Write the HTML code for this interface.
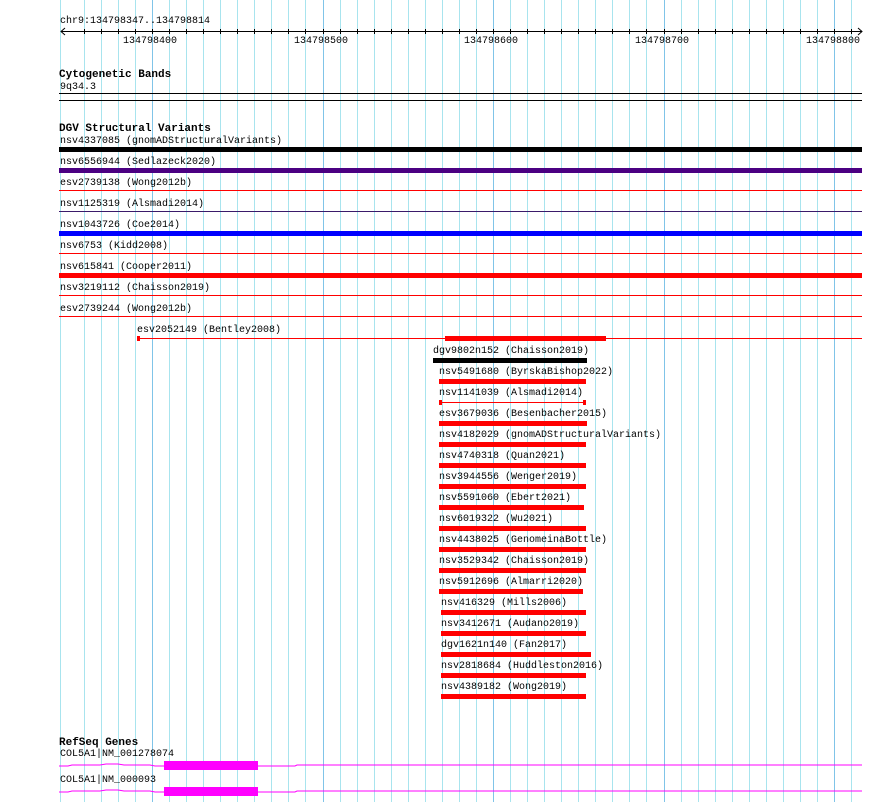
<!DOCTYPE html>
<html><head><meta charset="utf-8"><style>
body{margin:0;background:#fff;width:890px;height:802px;overflow:hidden;position:relative;font-family:"Liberation Mono","DejaVu Sans Mono",monospace;}
.t{position:absolute;font-size:10px;line-height:12px;white-space:pre;color:#000;}
.b{font-weight:bold;font-size:11px;}
svg{position:absolute;left:0;top:0}
</style></head><body>
<svg id="s" width="890" height="802" xmlns="http://www.w3.org/2000/svg"></svg>
<div class="t" style="left:60px;top:16px">chr9:134798347..134798814</div>
<div class="t" style="left:123px;top:36px">134798400</div>
<div class="t" style="left:294px;top:36px">134798500</div>
<div class="t" style="left:464px;top:36px">134798600</div>
<div class="t" style="left:635px;top:36px">134798700</div>
<div class="t" style="left:806px;top:36px">134798800</div>
<div class="t b" style="left:59px;top:69px">Cytogenetic Bands</div>
<div class="t" style="left:60px;top:82px">9q34.3</div>
<div class="t b" style="left:59px;top:123px">DGV Structural Variants</div>
<div class="t b" style="left:59px;top:737px">RefSeq Genes</div>
<div class="t" style="left:60px;top:749px">COL5A1|NM_001278074</div>
<div class="t" style="left:60px;top:775px">COL5A1|NM_000093</div>
<div id="labels"></div>
<script>
var s=document.getElementById('s'),h='';
function L(x1,y1,x2,y2,c,w){h+='<line x1="'+x1+'" y1="'+y1+'" x2="'+x2+'" y2="'+y2+'" stroke="'+c+'" stroke-width="'+(w||1)+'"/>';}
function R(x,y,w,hh,c){h+='<rect x="'+x+'" y="'+y+'" width="'+w+'" height="'+hh+'" fill="'+c+'"/>';}
L(60.5,0,60.5,802,'#a8e4ee');
for(var k=-4;k<=41;k++){var x=Math.round(152+17.05*k)+0.5;if(x>862)break;var major=(k%10==0);L(x,0,x,802,major?'#80c4e8':'#a8e4ee');}
L(61,31.5,862,31.5,'#000');
h+='<polyline points="65,28 61,31.5 65,35" fill="none" stroke="#000"/>';
h+='<polyline points="858,28 862,31.5 858,35" fill="none" stroke="#000"/>';
for(var k=-4;k<=41;k++){var x=Math.round(152+17.05*k)+0.5;if(x>858)break;L(x,29,x,34,'#000');}
L(59,93.5,862,93.5,'#000');L(59,100.5,862,100.5,'#000');
var rows=[['nsv4337085 (gnomADStructuralVariants)','#000',1],['nsv6556944 (Sedlazeck2020)','#4b0082',1],['esv2739138 (Wong2012b)','#ff0000',0],['nsv1125319 (Alsmadi2014)','#3a1a6a',0],['nsv1043726 (Coe2014)','#0000ff',1],['nsv6753 (Kidd2008)','#ff0000',0],['nsv615841 (Cooper2011)','#ff0000',1],['nsv3219112 (Chaisson2019)','#ff0000',0],['esv2739244 (Wong2012b)','#ff0000',0]];
var lab='';
for(var i=0;i<rows.length;i++){var y=149+21*i;lab+='<div class="t" style="left:60px;top:'+(y-13)+'px">'+rows[i][0]+'</div>';
 if(rows[i][2])R(59,y-2,803,5,rows[i][1]);else L(59,y+0.5-1,862,y+0.5-1,rows[i][1]);}
lab+='<div class="t" style="left:137px;top:325px">esv2052149 (Bentley2008)</div>';
L(137,338.5,862,338.5,'#ff0000');R(137,336,3,5,'#ff0000');R(445,336,161,5,'#ff0000');
var f=[['dgv9802n152 (Chaisson2019)',433,587,'#000'],['nsv5491680 (ByrskaBishop2022)',439,586],['nsv1141039 (Alsmadi2014)',439,586,'thin'],['esv3679036 (Besenbacher2015)',439,587],['nsv4182029 (gnomADStructuralVariants)',439,586],['nsv4740318 (Quan2021)',439,586],['nsv3944556 (Wenger2019)',439,586],['nsv5591060 (Ebert2021)',439,584],['nsv6019322 (Wu2021)',439,586],['nsv4438025 (GenomeinaBottle)',439,586],['nsv3529342 (Chaisson2019)',439,586],['nsv5912696 (Almarri2020)',439,583],['nsv416329 (Mills2006)',441,586],['nsv3412671 (Audano2019)',441,586],['dgv1621n140 (Fan2017)',441,591],['nsv2818684 (Huddleston2016)',441,586],['nsv4389182 (Wong2019)',441,586]];
for(var i=0;i<f.length;i++){var y=360+21*i;lab+='<div class="t" style="left:'+f[i][1]+'px;top:'+(y-14)+'px">'+f[i][0]+'</div>';
 if(f[i][3]=='thin'){L(f[i][1],y+0.5,f[i][2],y+0.5,'#ff0000');R(f[i][1],y-2,3,5,'#ff0000');R(f[i][2]-3,y-2,3,5,'#ff0000');}
 else R(f[i][1],y-2,f[i][2]-f[i][1],5,f[i][3]||'#ff0000');}
function gene(y){h+='<polyline points="59,'+(y+2)+' 68,'+(y+2)+' 72,'+(y+1)+' 100,'+(y+1)+' 106,'+y+' 118,'+y+' 124,'+(y+1)+' 150,'+(y+1)+' 155,'+(y+2)+' 164,'+(y+2)+' 258,'+(y+2)+' 295,'+(y+2)+' 297,'+(y+1)+' 862,'+(y+1)+'" fill="none" stroke="#ff00ff"/>';R(164,y-3,94,9,'#ff00ff');}
gene(764);gene(790);
s.innerHTML=h;document.getElementById('labels').innerHTML=lab;
</script>
</body></html>
